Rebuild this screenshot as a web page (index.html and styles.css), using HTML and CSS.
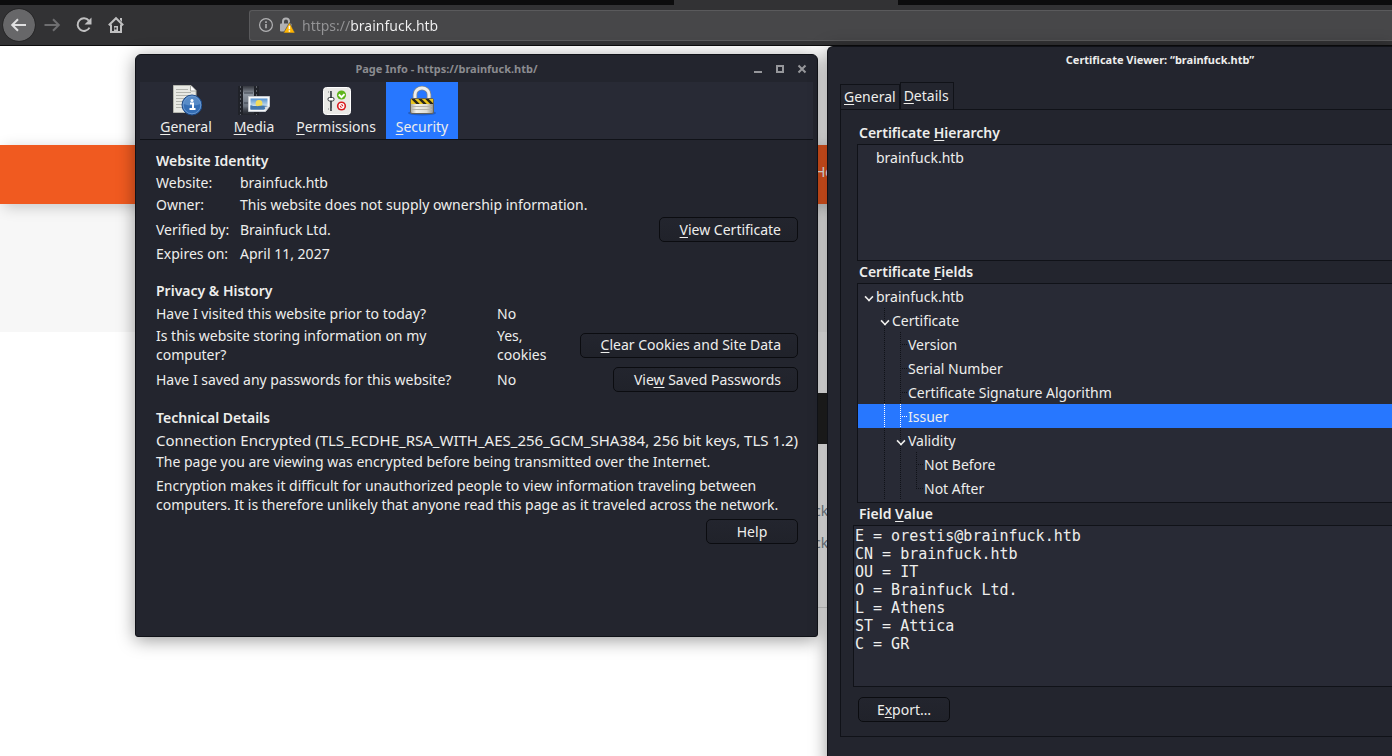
FILE: index.html
```html
<!DOCTYPE html>
<html lang="en">
<head>
<meta charset="utf-8">
<title>brainfuck.htb</title>
<link rel="stylesheet" href="styles.css">
</head>
<body>
<div class="browser">
  <div class="tabstrip"><span class="active-tab"></span></div>
  <nav class="toolbar">
    <button class="nav-btn back" aria-label="Back"><svg width="20" height="20" viewBox="0 0 20 20"><path d="M17 10H3.5M9 4.2L3.2 10L9 15.8"/></svg></button>
    <button class="nav-btn forward" aria-label="Forward"><svg width="20" height="20" viewBox="0 0 20 20"><path d="M2.5 10H16.5M11 4.2L16.8 10L11 15.8"/></svg></button>
    <button class="nav-btn" aria-label="Reload"><svg width="20" height="20" viewBox="0 0 20 20"><path d="M14.8 5.6A6.3 6.3 0 1 0 15.5 12.6"/><path class="fill" d="M17.5 2.5V9.5H10.5Z"/></svg></button>
    <button class="nav-btn" aria-label="Home"><svg width="20" height="20" viewBox="0 0 20 20"><path d="M2.8 10.2L10 3.2L17.2 10.2M5 9.5V17H15V9.5"/><path class="fill" d="M8 11h4v6H8zM14 3h2v4l-2-2z"/><path class="door" d="M9.5 12.5v2"/></svg></button>
    <div class="urlbar">
      <svg width="16" height="16" viewBox="0 0 16 16"><circle cx="8" cy="8" r="6.4" fill="none" stroke="#b1b1b3" stroke-width="1.2"/><path d="M8 7v4.2M8 4.2v1.7" stroke="#b1b1b3" stroke-width="1.6"/></svg>
      <svg width="16" height="16" viewBox="0 0 16 16"><path d="M4 7V4.500a3 3 0 0 1 6 0V7" fill="none" stroke="#b1b1b3" stroke-width="2"/><rect x="1" y="6.500" width="11.500" height="8" rx="1" fill="#b1b1b3"/><path d="M10.500 5.500L16 16H4.500Z" fill="#ffb400" stroke="#4a4a4c" stroke-width=".6"/><path d="M10.400 8.800v3.500M10.400 13.200v1.500" stroke="#fff" stroke-width="1.500"/></svg>
      <input class="url" type="text" aria-label="Address" value="https://brainfuck.htb">
    </div>
  </nav>
  <main class="site">
    <div class="site-top"></div>
    <div class="site-nav">He</div>
    <div class="site-hero"></div>
    <div class="site-gap"></div>
    <div class="site-dark"></div>
    <div class="site-list"><span>ck</span><span>ck</span></div>
  </main>
</div>

<section class="window page-info">
  <header class="titlebar">
    <h1>Page Info - https://brainfuck.htb/</h1>
    <div class="win-controls">
      <button aria-label="Minimize"><svg width="10" height="10" viewBox="0 0 10 10"><path d="M1 8h8"/></svg></button>
      <button aria-label="Maximize"><svg width="10" height="10" viewBox="0 0 10 10"><path d="M2 2h6v6H2z"/></svg></button>
      <button aria-label="Close"><svg width="10" height="10" viewBox="0 0 10 10"><path d="M1.500 1.500l7 7M8.500 1.500l-7 7"/></svg></button>
    </div>
  </header>
  <div class="info-tabs" role="tablist">
    <button role="tab"><svg width="32" height="32" viewBox="0 0 32 32">
      <path d="M3.500 1.500H21l5 5V28.500H3.500Z" fill="#e8e9e4" stroke="#b4b6ae"/><path d="M20.500 1.500V7H26" fill="#fff" stroke="#a9aba4"/><path d="M6 5.500h12M6 8.500h15M6 11.500h16M6 14.500h11M6 17.500h8M6 20.500h7M6 23.500h8" stroke="#b2b4ae"/><circle cx="22" cy="21" r="10" fill="#346eb5" stroke="#1d4a87"/><circle cx="22" cy="21" r="8.800" fill="none" stroke="#6a98cf" stroke-width="1"/><path d="M13.500 20a8.500 8.500 0 0 1 17 0q-8 3-17 0" fill="#6f9fd4" opacity=".6"/><path d="M20 19.500h3V25M19.500 25h6" fill="none" stroke="#fff" stroke-width="2"/><circle cx="22" cy="16.500" r="1.500" fill="#fff"/></svg><span><u>G</u>eneral</span></button>
    <button role="tab"><svg width="32" height="32" viewBox="0 0 32 32">
      <defs><linearGradient id="film" x2="0" y2="1"><stop offset="0" stop-color="#737780" stop-opacity=".25"/><stop offset=".25" stop-color="#8f97a2"/><stop offset=".7" stop-color="#6c737e"/><stop offset="1" stop-color="#3a3d46" stop-opacity=".1"/></linearGradient><linearGradient id="sky" x2="0" y2="1"><stop stop-color="#5291d2"/><stop offset=".65" stop-color="#c6ddeb"/><stop offset=".7" stop-color="#3f77b4"/></linearGradient></defs>
      <path d="M0 2h21v29H0z" fill="#17191e" opacity=".5"/><path d="M5 2h11v29H5z" fill="url(#film)"/><path d="M6 9h9M6 19h9" stroke="#3a414b" stroke-width="1"/><path d="M2.500 2v29M18.500 2v29" stroke="#5c6068" stroke-width="1" stroke-dasharray="2 2"/><path d="M10.500 12.500h21v10l-4 5h-17z" fill="#f8f9fa" stroke="#c4c8ce"/><path d="M12.500 14.500h17v8l-4 3h-13z" fill="url(#sky)"/><circle cx="21" cy="19.500" r="3.400" fill="#f3dc59"/><path d="M12.500 21q4 2 8 1t9 0l-3 3.500h-14z" fill="#4377ad"/><path d="M31 22l-4 5q1-4-1-4z" fill="#d9dde1"/></svg><span><u>M</u>edia</span></button>
    <button role="tab"><svg width="32" height="32" viewBox="0 0 32 32">
      <rect x="3.500" y="3.500" width="27" height="27" rx="3" fill="#e9e9e6" stroke="#fff"/><path d="M11 7v20" stroke="#51565a" stroke-width="2"/><path d="M8 8h6M8 25h6" stroke="#777b7d" stroke-dasharray="1 2"/><rect x="8" y="13.500" width="6" height="3.500" rx="1.500" fill="#fff" stroke="#30363a"/><circle cx="21.500" cy="11" r="4.600" fill="#5eb51d"/><path d="M18.800 10.500l2.700 2.600 3-3" fill="none" stroke="#fff" stroke-width="2"/><circle cx="21.500" cy="22" r="4.600" fill="#d91c20"/><circle cx="21.500" cy="22" r="2.400" fill="none" stroke="#fff" stroke-width="1.200"/><path d="M19.800 20.300l3.500 3.500" stroke="#fff" stroke-width="1.200"/></svg><span><u>P</u>ermissions</span></button>
    <button role="tab" class="selected" aria-selected="true"><svg width="32" height="32" viewBox="0 0 32 32">
      <defs><clipPath id="band"><path d="M5 15h22v5H5z"/></clipPath><linearGradient id="metal"><stop stop-color="#aaa89f"/><stop offset=".25" stop-color="#f1f0ea"/><stop offset=".7" stop-color="#deddd5"/><stop offset="1" stop-color="#929087"/></linearGradient></defs><ellipse cx="16" cy="29" rx="14" ry="2.500" fill="#18366f" opacity=".4"/><path d="M9 16V10.500a7 6.500 0 0 1 14 0V16" fill="none" stroke="#888a85" stroke-width="4.500"/><path d="M9 16V10.500a7 6.500 0 0 1 14 0V16" fill="none" stroke="#eeeeec" stroke-width="3"/><rect x="4.500" y="14.500" width="23" height="15" rx="1.500" fill="url(#metal)" stroke="#62625d"/><path d="M5 15h22v5H5z" fill="#e9c51c"/><path clip-path="url(#band)" d="M6 14l7 7M13 14l7 7M20 14l7 7" stroke="#292719" stroke-width="2.500"/><path d="M6 22.500h20M6 25.500h20" stroke="#b5b3aa"/></svg><span><u>S</u>ecurity</span></button>
  </div>
  <div class="info-body">
    <section class="group">
      <h2>Website Identity</h2>
      <div class="row identity"><span>Website:</span><span>brainfuck.htb</span></div>
      <div class="row identity"><span>Owner:</span><span>This website does not supply ownership information.</span></div>
      <div class="row identity action"><span>Verified by:</span><span>Brainfuck Ltd.</span><button class="btn"><u>V</u>iew Certificate</button></div>
      <div class="row identity"><span>Expires on:</span><span>April 11, 2027</span></div>
    </section>
    <section class="group">
      <h2>Privacy &amp; History</h2>
      <div class="row history"><span>Have I visited this website prior to today?</span><span>No</span></div>
      <div class="row history wrap"><span>Is this website storing information on my computer?</span><span>Yes, cookies</span><button class="btn"><u>C</u>lear Cookies and Site Data</button></div>
      <div class="row history action"><span>Have I saved any passwords for this website?</span><span>No</span><button class="btn">Vie<u>w</u> Saved Passwords</button></div>
    </section>
    <section class="group">
      <h2>Technical Details</h2>
      <p class="cipher">Connection Encrypted (TLS_ECDHE_RSA_WITH_AES_256_GCM_SHA384, 256 bit keys, TLS 1.2)</p>
      <p>The page you are viewing was encrypted before being transmitted over the Internet.</p>
      <p class="note">Encryption makes it difficult for unauthorized people to view information traveling between<br>computers. It is therefore unlikely that anyone read this page as it traveled across the network.</p>
    </section>
    <div class="help"><button class="btn">Help</button></div>
  </div>
</section>

<section class="window viewer">
  <header class="titlebar"><h1>Certificate Viewer: “brainfuck.htb”</h1></header>
  <div class="viewer-tabs" role="tablist"><button role="tab"><u>G</u>eneral</button><button role="tab" class="selected" aria-selected="true"><u>D</u>etails</button></div>
  <div class="panel">
    <h2>Certificate <u>H</u>ierarchy</h2>
    <ul class="tree hierarchy"><li><i class="cell"></i>brainfuck.htb</li></ul>
    <h2>Certificate <u>F</u>ields</h2>
    <ul class="tree fields" role="tree">
      <li><i class="cell open"></i>brainfuck.htb</li>
      <li><i class="cell"></i><i class="cell line open"></i>Certificate</li>
      <li><i class="cell"></i><i class="cell line"></i><i class="cell line tee"></i>Version</li>
      <li><i class="cell"></i><i class="cell line"></i><i class="cell line tee"></i>Serial Number</li>
      <li><i class="cell"></i><i class="cell line"></i><i class="cell line tee"></i>Certificate Signature Algorithm</li>
      <li class="selected"><i class="cell"></i><i class="cell line"></i><i class="cell line tee"></i>Issuer</li>
      <li><i class="cell"></i><i class="cell line"></i><i class="cell line open"></i>Validity</li>
      <li><i class="cell"></i><i class="cell line"></i><i class="cell line"></i><i class="cell line tee"></i>Not Before</li>
      <li><i class="cell"></i><i class="cell line"></i><i class="cell line"></i><i class="cell line tee last"></i>Not After</li>
    </ul>
    <h2><label for="value">Field <u>V</u>alue</label></h2>
    <textarea id="value" class="value" readonly>E = orestis@brainfuck.htb
CN = brainfuck.htb
OU = IT
O = Brainfuck Ltd.
L = Athens
ST = Attica
C = GR</textarea>
    <button class="btn export">E<u>x</u>port…</button>
  </div>
</section>
</body>
</html>
```
FILE: styles.css
```css
* { box-sizing: border-box; }
body {
  margin: 0;
  min-height: 100vh;
  position: relative;
  overflow: hidden;
  background: #fff;
  color: #eeeeec;
  font: 14px/22px "Noto Sans", "Open Sans", sans-serif;
}
button, input, textarea { font: inherit; color: inherit; margin: 0; padding: 0; border: 0; background: none; }
h1, h2, p, ul { margin: 0; padding: 0; }
u { text-decoration-thickness: 1px; text-underline-offset: 2px; }

/* Browser chrome */
.tabstrip { height: 5px; background: #0c0c0d; display: flex; }
.active-tab { width: 224px; margin-left: 674px; background: #323234; }
.toolbar {
  display: flex; align-items: center;
  height: 41px; padding-left: 3px;
  background: #323234; border-bottom: 1px solid #0c0c0d;
}
.nav-btn { flex: none; width: 32px; height: 32px; display: grid; place-items: center; }
.nav-btn svg { fill: none; stroke: #c0c0c1; stroke-width: 2; }
.nav-btn .fill { fill: #c0c0c1; stroke: none; }
.nav-btn .door { stroke: #323234; }
.back { background: #676769; border-radius: 50%; outline: 1px solid #29292a; margin-right: 1px; }
.back svg { stroke: #e0e0e1; }
.forward svg { stroke: #6e6e70; }
.urlbar {
  flex: 1; display: flex; align-items: center; gap: 5px;
  height: 31px; margin-left: 117px; padding-left: 8px;
  background: #474749; border: 1px solid #5a5a5c; border-right: 0; border-radius: 3px 0 0 3px;
}
.urlbar svg { flex: none; }
.url {
  flex: 1; min-width: 0; height: 24px; margin-left: 2px; outline: 0;
  color: transparent;
  background: linear-gradient(90deg, #949496 49px, #f2f2f3 49px);
  -webkit-background-clip: text; background-clip: text;
}

/* Page behind the windows */
.site-top { height: 99px; }
.site-nav { height: 59px; background: #f05a20; box-shadow: 4px 3px 14px rgba(0,0,0,.2); position: relative; padding: 16px 0 0 815px; color: #fff; }
.site-hero { height: 128px; background: #f7f7f7; }
.site-gap { height: 61px; }
.site-dark { height: 51px; margin-left: 400px; background: #222; }
.site-list { height: 164px; margin-left: 400px; padding: 56px 0 0 414px; border-bottom: 1px solid #ddd; display: flex; flex-direction: column; gap: 10px; color: #7a8590; }

/* Windows */
.window {
  position: absolute;
  background: #23252e;
  border: 1px solid #101218;
  border-radius: 6px 6px 3px 3px;
  box-shadow: 0 3px 18px rgba(0,0,0,.4);
}
.titlebar { display: flex; align-items: center; height: 27px; }
.titlebar h1 { flex: 1; text-align: center; font-size: 11px; font-weight: 700; }

.page-info { left: 135px; top: 54px; width: 683px; min-height: 583px; padding: 0 4px; }
.page-info h1 { color: #8b8c90; }
.win-controls { display: flex; gap: 12px; padding-right: 6px; }
.win-controls button { display: flex; width: 10px; height: 10px; }
.win-controls svg { fill: none; stroke: #96979b; stroke-width: 2; }
.info-tabs {
  display: grid; grid-template-columns: 72px 64px 100px 72px;
  height: 58px; padding-left: 10px;
  background: #282a35; border-bottom: 1px solid #101218;
}
.info-tabs button { display: flex; flex-direction: column; align-items: center; padding-top: 2px; }
.info-tabs svg { flex: none; }
.selected { background: #2777ff; }
.info-body { padding: 10px 15px 16px 16px; }
.group { margin-bottom: 15px; }
h2 { font-size: 14px; font-weight: 600; line-height: 22px; }
.row { display: grid; align-items: center; min-height: 22px; }
.identity { grid-template-columns: 84px 1fr auto; }
.history { grid-template-columns: 341px 1fr auto; line-height: 19px; }
.history span:first-child { max-width: 300px; }
.history span:nth-child(2) { max-width: 60px; }
.action { min-height: 25px; margin: 1px 0; }
.wrap { min-height: 38px; margin: 2px 0 3px; }
.cipher { font-size: 15px; white-space: nowrap; }
.note { line-height: 19px; margin-top: 3px; }
.btn {
  height: 25px; padding: 0 16px 0 20px;
  border: 1px solid #0b0c10; border-radius: 5px;
  background: linear-gradient(#23252e, #20222a);
  line-height: 22px;
}
.help { display: flex; justify-content: flex-end; margin-top: -10px; }
.help .btn { width: 92px; padding: 0; }

/* Certificate viewer */
.viewer { left: 827px; right: 0; top: 46px; min-height: 720px; padding-left: 12px; border-right: 0; border-radius: 6px 0 0 0; }
.viewer .titlebar { height: 25px; padding-left: 88px; }
.viewer-tabs { display: flex; align-items: flex-end; margin-top: 10px; }
.viewer-tabs button { height: 25px; padding: 0 3px; border: 1px solid #101218; border-bottom: 0; }
.viewer-tabs .selected { height: 27px; background: #23252e; padding: 0 4px 1px 3px; }
.panel { border: 1px solid #101218; border-right: 0; padding: 12px 0 14px 12px; }
.panel h2 { padding-left: 6px; }
.tree { list-style: none; background: #282a35; border: 1px solid #101218; border-right: 0; margin-left: 4px; line-height: 25px; }
.tree li { display: flex; height: 24px; padding-left: 2px; }
.hierarchy { height: 117px; }
.fields { height: 220px; overflow: hidden; }
.cell { flex: none; position: relative; width: 16px; --dot: #101218; }
li.selected .cell { --dot: #fff; }
.line { background: repeating-linear-gradient(var(--dot) 0 1px, transparent 1px 2px) 8px 0 / 1px 100% no-repeat; }
.last { background-size: 1px 50%; }
.tee::after {
  content: ""; position: absolute; left: 8px; top: 12px; width: 8px; height: 1px;
  background: repeating-linear-gradient(90deg, var(--dot) 0 1px, transparent 1px 2px);
}
.open::before {
  content: ""; position: absolute; left: 5px; top: 9px; width: 6px; height: 6px;
  border: solid #eeeeec; border-width: 0 2px 2px 0; transform: rotate(45deg) scale(.8);
}
.value {
  display: block; width: 100%; height: 162px; padding: 1px;
  background: #282a35; border: 1px solid #101218; border-right: 0; resize: none; overflow: hidden;
  font: 15px/18px "DejaVu Sans Mono", monospace; outline: 0;
}
.export { display: block; width: 92px; margin: 10px 0 0 5px; padding: 0; }
```
